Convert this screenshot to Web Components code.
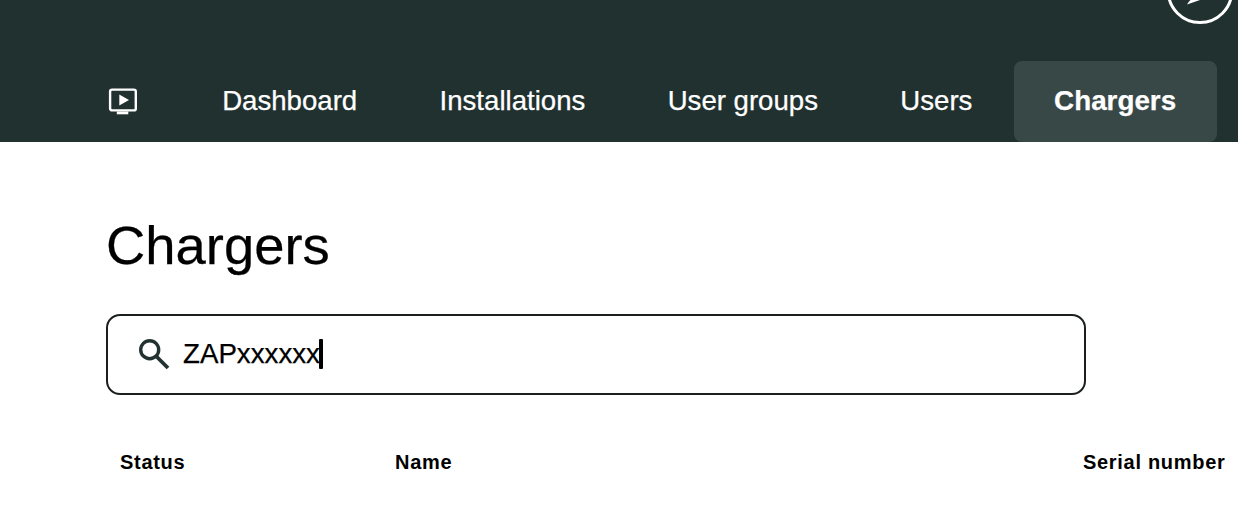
<!DOCTYPE html>
<html><head><meta charset="utf-8"><title>Chargers</title>
<style>
html,body{margin:0;padding:0;background:#fff;height:518px;overflow:hidden}
body{font-family:"Liberation Sans",Arial,sans-serif;color:#000}
</style></head><body>
<app-header></app-header>
<main-content></main-content>
<script>
function def(name, html){
  customElements.define(name, class extends HTMLElement{
    constructor(){super();this.attachShadow({mode:'open'}).innerHTML=html;}
  });
}
def('app-logo',`<style>:host{display:block;width:66px;height:24px;overflow:hidden}svg{display:block}</style>
<svg width="66" height="24" viewBox="0 0 66 24"><circle cx="33" cy="-9.3" r="31.8" fill="none" stroke="#fff" stroke-width="3"/><path d="M46 -4.5 L20 4.5 Q21.5 1.5 23.5 0 L28 -4 Z" fill="#fff"/></svg>`);
def('nav-item',`<style>:host{display:flex;align-items:center;height:81px;padding:0 41.2px 1px;box-sizing:border-box;font-size:27.6px;color:#fff;white-space:nowrap;border-radius:8px;-webkit-text-stroke:.25px #fff}
:host([active]){background:#384846;font-weight:700;font-size:27.8px;padding:0 40.5px 1px}</style><slot></slot>`);
def('nav-icon',`<style>:host{display:flex;align-items:center;width:30px;height:81px}svg{display:block}</style>
<svg width="30" height="28" viewBox="0 0 30 28" fill="none"><rect x="2.1" y="1.6" width="25.7" height="20.8" rx="2" stroke="#fff" stroke-width="2.4"/><path d="M11.3 6.5v11l9.7-5.5z" fill="#fff"/><rect x="8.8" y="23.5" width="11.5" height="2.8" fill="#fff"/></svg>`);
def('app-header',`<style>:host{display:block;background:#203130;height:142px;box-sizing:border-box}
.top{display:flex;justify-content:flex-end;height:61px;padding-right:5px}
nav{display:flex;align-items:center;padding-left:108px}
nav-icon{margin-right:43px}</style>
<div class="top"><app-logo></app-logo></div>
<nav><nav-icon></nav-icon><nav-item>Dashboard</nav-item><nav-item>Installations</nav-item><nav-item>User groups</nav-item><nav-item>Users</nav-item><nav-item active>Chargers</nav-item></nav>`);
def('search-box',`<style>:host{display:flex;align-items:center;width:980px;height:81px;box-sizing:border-box;border:2px solid #1b1f1f;border-radius:14px;padding:0 0 2px 30px;font-size:27.7px;color:#000;-webkit-text-stroke:.25px #000}
svg{display:block;margin-right:13px}.caret{display:inline-block;width:3.5px;height:30px;margin-left:-.5px;background:#000;border-radius:1px}
.v{display:flex;align-items:center}</style>
<svg width="32" height="32" viewBox="0 0 32 32" fill="none"><circle cx="11.7" cy="11.7" r="9" stroke="#223230" stroke-width="3.4"/><path d="M18 18l12 12" stroke="#223230" stroke-width="3.8"/></svg>
<span class="v"><slot></slot><span class="caret"></span></span>`);
def('table-head',`<style>:host{display:grid;grid-template-columns:275px 688px auto;padding-left:14px;font-size:20px;font-weight:700;letter-spacing:.7px;white-space:nowrap}</style>
<span>Status</span><span>Name</span><span>Serial number</span>`);
def('main-content',`<style>:host{display:block;padding:69px 0 0 106px}
h1{margin:0;font-size:54.4px;font-weight:400;line-height:70px;color:#000;-webkit-text-stroke:.25px #000}
search-box{margin-top:33px}table-head{margin-top:56px}</style>
<h1>Chargers</h1><search-box>ZAPxxxxxx</search-box><table-head></table-head>`);
</script></body></html>
